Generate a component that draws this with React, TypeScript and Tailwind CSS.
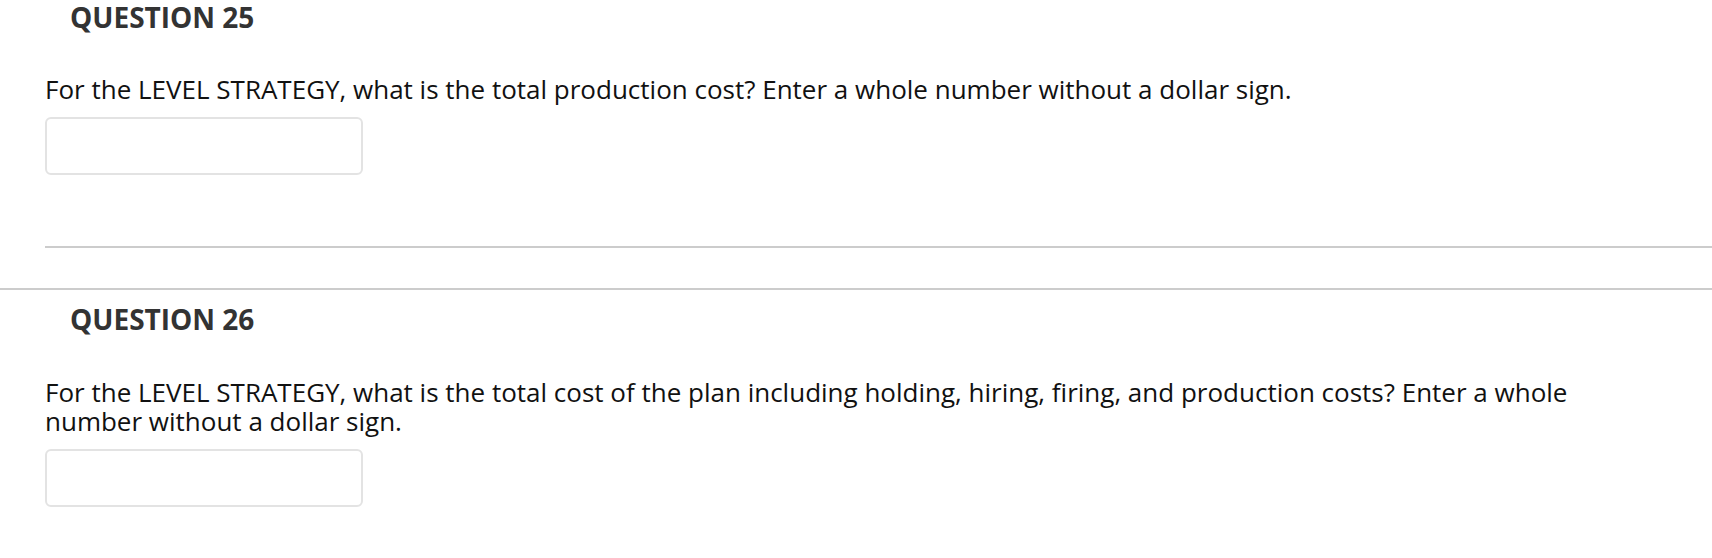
export default function App() {
  return (
    <div className="min-h-screen w-full bg-white font-['Open_Sans',sans-serif]">
      {/* question 25 */}
      <section>
        <h2 className="pl-[70px] text-[28px] leading-[34px] font-bold text-[#333333]">QUESTION 25</h2>
        <div className="pl-[45px]">
          <p className="mt-[41px] max-w-[1575px] text-[26px] leading-[29px] text-[#111111]">
            For the LEVEL STRATEGY, what is the total production cost? Enter a whole number without a dollar sign.
          </p>
          <input
            type="text"
            className="mt-[13px] block h-[58px] w-[318px] rounded-md border-2 border-[#e3e3e3] bg-white outline-none"
          />
          <div className="mt-[71px] h-[2px] bg-[#cccccc]" />
        </div>
      </section>

      <div className="mt-[40px] h-[2px] bg-[#cccccc]" />

      {/* question 26 */}
      <section>
        <h2 className="mt-[12px] pl-[70px] text-[28px] leading-[34px] font-bold text-[#333333]">QUESTION 26</h2>
        <div className="pl-[45px]">
          <p className="mt-[42px] max-w-[1575px] text-[26px] leading-[29px] text-[#111111]">
            For the LEVEL STRATEGY, what is the total cost of the plan including holding, hiring, firing, and production
            costs? Enter a whole number without a dollar sign.
          </p>
          <input
            type="text"
            className="mt-[13px] block h-[58px] w-[318px] rounded-md border-2 border-[#e3e3e3] bg-white outline-none"
          />
        </div>
      </section>
    </div>
  )
}
